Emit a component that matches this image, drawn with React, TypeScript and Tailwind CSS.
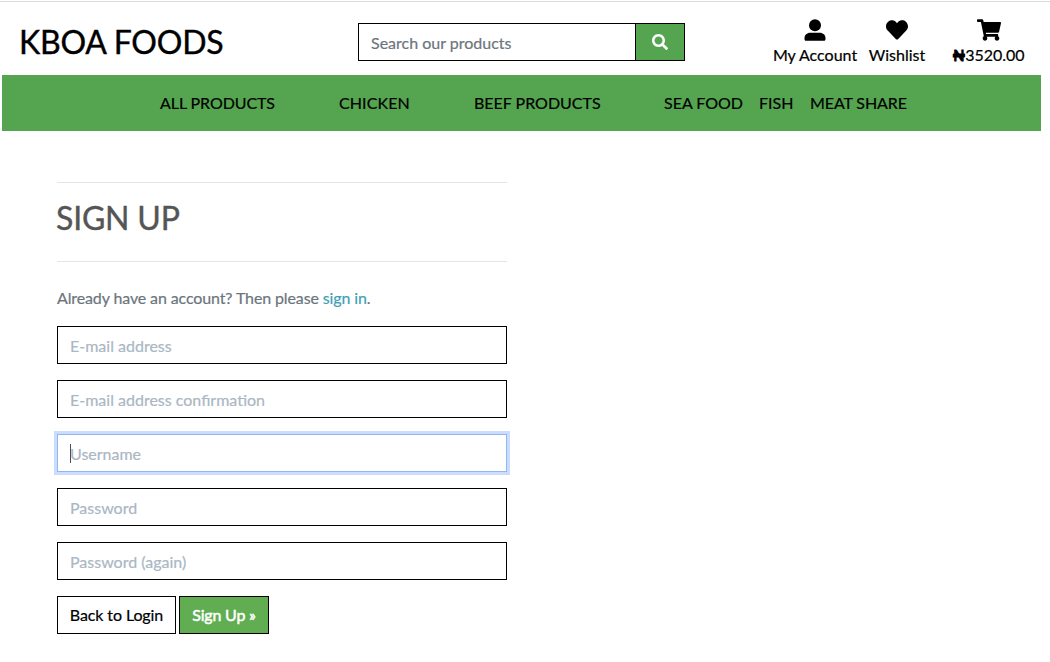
import React from "react";
import { FaSearch, FaHeart, FaShoppingCart } from "react-icons/fa";

const fields = ["E-mail address", "E-mail address confirmation", "Username", "Password", "Password (again)"];

function UserIcon() {
  return (
    <svg width="22" height="22" viewBox="0 0 22 22" fill="currentColor">
      <circle cx="11" cy="6.200" r="6" />
      <path d="M6.300 13.800h9.400c3.400 0 5.800 2.300 5.800 5.200v1.200c0 .9-.6 1.500-1.500 1.500H2c-.9 0-1.500-.6-1.500-1.500V19c0-2.900 2.400-5.200 5.800-5.200z" />
    </svg>
  );
}

export default function App() {
  return (
    <div className="h-[662px] w-[1050px] overflow-hidden bg-white pt-px font-['Lato',sans-serif] text-base leading-6 text-black [-webkit-text-stroke:0.2px]">
      <header className="flex h-[74px] border-t border-[#d9dbda] pl-[19px]">
        <h1 className="w-[339px] pt-5 text-[32px] leading-10 tracking-[-0.2px] [-webkit-text-stroke:0.4px]">KBOA FOODS</h1>
        <form className="mt-[21px] flex h-[38px] w-[327px] border border-black">
          <input className="min-w-0 flex-1 px-3 pt-[2px] outline-none placeholder:text-[#6c757d]" placeholder="Search our products" />
          <button type="button" className="flex w-[49px] items-center justify-center border-l border-black bg-[#55a550] text-white">
            <FaSearch size={16} />
          </button>
        </form>
        <div className="ml-[88px] flex pt-[17px]">
          <a className="flex w-[84px] flex-col items-center whitespace-nowrap"><UserIcon /><span className="mt-[2px]">My Account</span></a>
          <a className="ml-[11px] flex w-[58px] flex-col items-center"><FaHeart size={22} /><span className="mt-[2px]">Wishlist</span></a>
          <a className="ml-[26px] flex w-[73px] flex-col items-center"><FaShoppingCart size={24} className="-mt-px -mb-px" /><span className="mt-[2px]"><span className="[-webkit-text-stroke:1px]">₦</span>3520.00</span></a>
        </div>
      </header>
      <nav className="ml-[2px] flex h-14 w-[1039px] items-center bg-[#55a550] pl-[158px] whitespace-nowrap">
        <a className="w-[179px] tracking-[-0.08px]">ALL PRODUCTS</a>
        <a className="w-[135px] tracking-[0.1px]">CHICKEN</a>
        <a className="w-[190px]">BEEF PRODUCTS</a>
        <a className="w-[95px]">SEA FOOD</a>
        <a className="w-[51px]">FISH</a>
        <a className="tracking-[-0.1px]">MEAT SHARE</a>
      </nav>
      <main className="ml-[57px] w-[450px] pt-[51px] text-[#555]">
        <hr className="border-[#e5e5e5]" />
        <h2 className="-ml-px mt-[15px] mb-6 text-[32px] leading-[39px] tracking-[-0.2px] [-webkit-text-stroke:0.4px]">SIGN UP</h2>
        <hr className="border-[#e5e5e5]" />
        <p className="mt-6 mb-4 tracking-[-0.12px] text-[#6c757d]">Already have an account? Then please <a className="text-[#3f9fb5]">sign in</a>.</p>
        <div className="flex flex-col gap-4">
          {fields.map((f) =>
            f === "Username" ? (
              <div key={f} className="relative">
                <input placeholder={f} className="block h-[38px] w-full border border-[#8bb8f8] px-3 shadow-[0_0_0_3px_#cbdcfc] outline-none placeholder:text-[#aab7c4]" />
                <span className="absolute top-[10px] left-[13px] h-[19px] w-px bg-[#495057]" />
              </div>
            ) : (
              <input key={f} placeholder={f} className="block h-[38px] w-full border border-black px-3 outline-none placeholder:text-[#aab7c4]" />
            )
          )}
        </div>
        <div className="mt-4 flex gap-[3px] whitespace-nowrap">
          <button className="h-[38px] w-[119px] border border-black tracking-[-0.1px] text-black">Back to Login</button>
          <button className="h-[38px] w-[90px] border border-black bg-[#60ad52] tracking-[-0.2px] text-white [-webkit-text-stroke:0.5px]">Sign Up »</button>
        </div>
      </main>
    </div>
  );
}
